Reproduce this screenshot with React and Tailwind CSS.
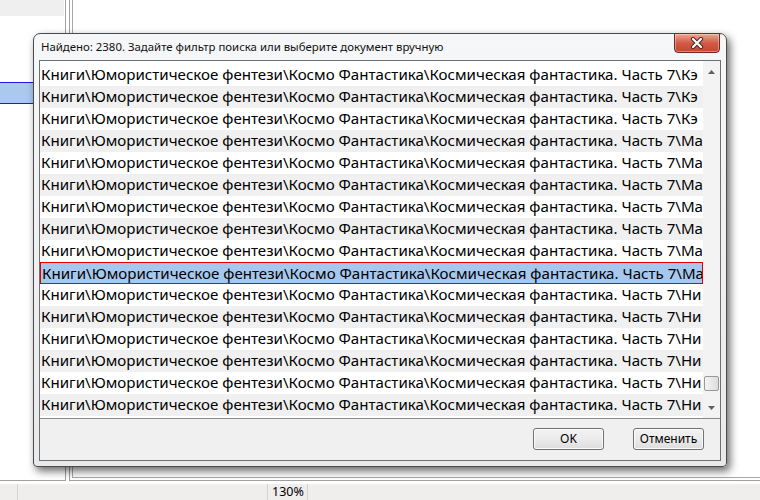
const ui = { fontFamily: '"Noto Sans", "Open Sans", sans-serif' };

const base = "Книги\\Юмористическое фентези\\Космо Фантастика\\Космическая фантастика. Часть 7\\";

const rows = Array.from({ length: 16 }, (_, i) =>
  i < 3 ? "Кэ" : i < 10 ? "Ма" : "Ни"
);

const Button = ({ children }) => (
  <button className="w-[71px] h-[22px] rounded-[3px] border border-[#707070] bg-gradient-to-b from-[#f2f2f2] via-[#ebebeb] to-[#dddddd] text-[12px] text-black leading-none shadow-[inset_0_0_0_1px_#fcfcfc]">
    {children}
  </button>
);

const CloseButton = () => (
  <div className="absolute right-[6px] top-[-1px] w-[46px] h-[20px] rounded-b-[4px] border border-[#6d2a22] bg-gradient-to-b from-[#e9a796] via-[#d25a45] to-[#c8472f] flex items-center justify-center shadow-[inset_0_0_0_1px_rgba(255,255,255,0.35)]">
    <svg width="14" height="12" viewBox="0 0 14 12">
      <path d="M3 2 L11 10 M11 2 L3 10" stroke="#4a2a26" strokeWidth="4.2" strokeLinecap="round" />
      <path d="M3 2 L11 10 M11 2 L3 10" stroke="#ffffff" strokeWidth="2.2" strokeLinecap="round" />
    </svg>
  </div>
);

const Scrollbar = () => (
  <div className="w-[17px] bg-[#f3f3f3] flex flex-col items-center">
    <div className="h-[17px] flex items-center justify-center mt-[2px]">
      <svg width="7" height="4" viewBox="0 0 7 4">
        <path d="M0 4 L3.5 0 L7 4 Z" fill="#606060" />
      </svg>
    </div>
    <div className="flex-1 w-full flex flex-col justify-end">
      <div className="mx-auto w-[15px] h-[15px] rounded-[2px] border border-[#989898] bg-gradient-to-r from-[#f4f4f4] to-[#dcdcdc]" />
      <div className="h-[8px]" />
    </div>
    <div className="h-[17px] flex items-center justify-center mb-[2px]">
      <svg width="7" height="4" viewBox="0 0 7 4">
        <path d="M0 0 L7 0 L3.5 4 Z" fill="#606060" />
      </svg>
    </div>
  </div>
);

export default function App() {
  return (
    <div className="relative w-[760px] h-[500px] overflow-hidden bg-white flex flex-col" style={ui}>
      {/* background application */}
      <div className="h-[484px] flex items-start">
        <div className="w-[66px] h-[481px] border-r border-b border-[#a0a0a0] flex flex-col">
          <div className="h-[16px] w-[64px] bg-[#efefef]" />
          <div className="mt-[66px] h-[22px] border-y border-[#1a1ae6] bg-[#a9c9ef]" />
        </div>
        <div className="ml-[3px] flex-1 h-[481px] border-l border-b border-[#a0a0a0] pl-[2px] pb-[2px]">
          <div className="h-full border-l border-b border-[#a8a8a8]" />
        </div>
      </div>
      <div className="h-[16px] bg-[#f0eded] flex text-[12.5px] text-black leading-[16px]">
        <div className="w-[18px] border-r border-[#d6d2d2]" />
        <div className="w-[250px] border-r border-[#d6d2d2]" />
        <div className="w-[40px] pl-[4px] border-r border-[#d6d2d2]">130%</div>
      </div>

      {/* dialog window */}
      <div className="absolute left-[33px] top-[33px] w-[694px] h-[434px] rounded-t-[7px] rounded-b-[4px] border border-[#4b4b4b] bg-gradient-to-b from-[#f6f7f8] via-[#eef0f1] to-[#e7e9eb] shadow-[3px_4px_9px_rgba(0,0,0,0.6)] flex flex-col">
        <div className="h-[26px] pl-[7px] flex items-center text-[11.4px] text-[#111]">
          Найдено: 2380. Задайте фильтр поиска или выберите документ вручную
        </div>
        <CloseButton />
        <div className="mx-[5px] h-[401px] border border-[#6f6f6f] bg-[#f0f0f0] flex flex-col">
          <div className="h-[358px] border-b border-[#8a8a8a] bg-white flex">
            <div className="flex-1 pt-[3px] overflow-hidden">
              {rows.map((tail, i) => (
                <div
                  key={i}
                  className={`h-[22px] pl-[1px] whitespace-nowrap overflow-hidden text-[15.1px] leading-[21px] text-black ${
                    i === 9
                      ? "bg-[#a7c8ee] border border-[#e00000] pl-0"
                      : i % 2
                      ? "bg-[#f0f0f0]"
                      : "bg-white"
                  }`}
                >
                  {base + tail}
                </div>
              ))}
            </div>
            <Scrollbar />
          </div>
          <div className="flex-1 flex justify-end items-start pt-[9px] pr-[16px] gap-[29px]">
            <Button>OK</Button>
            <Button>Отменить</Button>
          </div>
        </div>
      </div>
    </div>
  );
}
